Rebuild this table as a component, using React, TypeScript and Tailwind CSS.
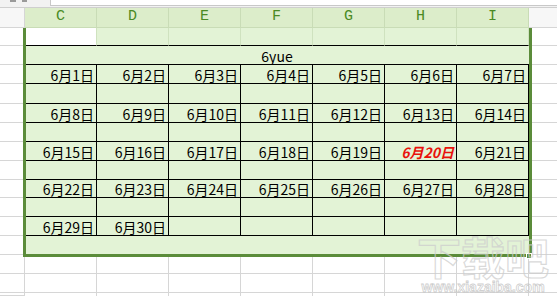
import React from "react";

const COLS = ["C", "D", "E", "F", "G", "H", "I"];

const cellFont = { fontFamily: '"Noto Sans CJK SC", sans-serif' };

type Cell = { text?: string; red?: boolean; white?: boolean };
type RowDef = { h: string; cells?: Cell[]; merged?: string; black: boolean; blackBottom: boolean; noLines?: boolean };

const week = (start: number, count: number): Cell[] =>
  COLS.map((_, i) => (i < count ? { text: `6月${start + i}日`, red: start + i === 20 } : {}));

const empty: Cell[] = COLS.map(() => ({}));

const rows: RowDef[] = [
  { h: "h-[18px]", cells: COLS.map((_, i) => ({ white: i === 0 })), black: false, blackBottom: true },
  { h: "h-[19px]", merged: "6yue", black: false, blackBottom: true },
  { h: "h-[19px]", cells: week(1, 7), black: true, blackBottom: true },
  { h: "h-[20px]", cells: empty, black: true, blackBottom: true },
  { h: "h-[19px]", cells: week(8, 7), black: true, blackBottom: true },
  { h: "h-[19px]", cells: empty, black: true, blackBottom: true },
  { h: "h-[19px]", cells: week(15, 7), black: true, blackBottom: true },
  { h: "h-[19px]", cells: empty, black: true, blackBottom: true },
  { h: "h-[18px]", cells: week(22, 7), black: true, blackBottom: true },
  { h: "h-[19px]", cells: empty, black: true, blackBottom: true },
  { h: "h-[19px]", cells: week(29, 2), black: true, blackBottom: true },
  { h: "h-[19px]", cells: empty, black: false, blackBottom: false, noLines: true },
];

const RowHead = ({ h }: { h: string }) => (
  <div className={`${h} w-[25px] shrink-0 border-b border-r border-[#d6d6d6] bg-white`} />
);

const Filler = ({ h }: { h: string }) => <div className={`${h} flex-1 border-b border-[#d6d6d6] bg-white`} />;

const TableRow = ({ row }: { row: RowDef }) => (
  <div className="flex">
    <RowHead h={row.h} />
    {row.merged ? (
      <div
        className={`${row.h} w-[504px] flex items-end justify-center bg-[#e3f3d6] text-[14px] leading-[16px] text-black ${
          row.blackBottom ? "border-b border-black" : "border-b border-[#cfe2bf]"
        }`}
        style={cellFont}
      >
        {row.merged}
      </div>
    ) : (
      row.cells!.map((c, i) => (
        <div
          key={i}
          className={`${row.h} w-[72px] shrink-0 flex items-end justify-end pr-[2px] text-[14px] leading-[16px] ${
            c.white ? "bg-white" : "bg-[#e3f3d6]"
          } ${row.blackBottom ? "border-b border-black" : "border-b border-[#cfe2bf]"} ${
            row.noLines ? "" : row.black ? "border-r border-r-black" : "border-r border-r-[#cfe2bf]"
          } ${c.red ? "text-[#e8120c] font-bold italic" : "text-black"}`}
          style={cellFont}
        >
          {c.text}
        </div>
      ))
    )}
    <Filler h={row.h} />
  </div>
);

export default function App() {
  return (
    <div className="relative w-[557px] h-[296px] overflow-hidden bg-white">
      {/* top toolbar strip */}
      <div className="flex h-[8px] border-b border-[#cfcfcf] bg-[#f2f2f2]">
        <div className="w-[50px] flex items-start gap-[6px] pl-[10px]">
          <div className="w-[6px] h-[2px] bg-[#9a9a9a]" />
          <div className="w-[5px] h-[2px] bg-[#9a9a9a]" />
        </div>
        <div className="flex-1 h-[6px] bg-white border-l border-b border-[#c8c8c8]" />
      </div>

      {/* column headers */}
      <div className="flex h-[20px]">
        <div className="w-[25px] shrink-0 border-b border-r border-[#d6d6d6] bg-[#f7f7f7]" />
        {COLS.map((c) => (
          <div
            key={c}
            className="w-[72px] shrink-0 flex items-center justify-center border-r border-b border-[#c9dcb6] bg-[#dcedca] text-[15px] text-[#4a8a24]"
            style={{ fontFamily: '"Liberation Mono", monospace' }}
          >
            {c}
          </div>
        ))}
        <div className="flex-1 border-b border-[#d6d6d6] bg-[#f7f7f7]" />
      </div>

      {rows.map((r, i) => (
        <TableRow key={i} row={r} />
      ))}

      {/* rows below the table */}
      {[0, 1].map((k) => (
        <div key={k} className="flex">
          <RowHead h="h-[19px]" />
          {COLS.map((c) => (
            <div key={c} className="h-[19px] w-[72px] shrink-0 border-r border-b border-[#d6d6d6]" />
          ))}
          <Filler h="h-[19px]" />
        </div>
      ))}
      <div className="flex">
        <RowHead h="h-[3px]" />
        {COLS.map((c) => (
          <div key={c} className="h-[3px] w-[72px] shrink-0 border-r border-[#d6d6d6]" />
        ))}
      </div>

      {/* selection border */}
      <div className="absolute left-[23px] top-[28px] w-[509px] h-[229px] border-x-[3px] border-b-[3px] border-[#5b8c3a] pointer-events-none" />
      <div className="absolute left-[526px] top-[253px] w-[6px] h-[6px] bg-[#5b8c3a] border border-white" />

      {/* watermark */}
      <div className="absolute left-[412px] top-[234px] w-[142px] flex flex-col items-center gap-[3px] pointer-events-none">
        <div
          className="text-[44px] leading-[44px] font-bold text-transparent [-webkit-text-stroke:1.2px_rgba(205,205,205,0.75)]"
          style={cellFont}
        >
          下载吧
        </div>
        <div
          className="text-[14px] leading-[12px] font-bold text-transparent [-webkit-text-stroke:0.8px_rgba(195,195,195,0.8)]"
          style={{ fontFamily: '"Liberation Sans", sans-serif' }}
        >
          www.xiazaiba.com
        </div>
      </div>
    </div>
  );
}
